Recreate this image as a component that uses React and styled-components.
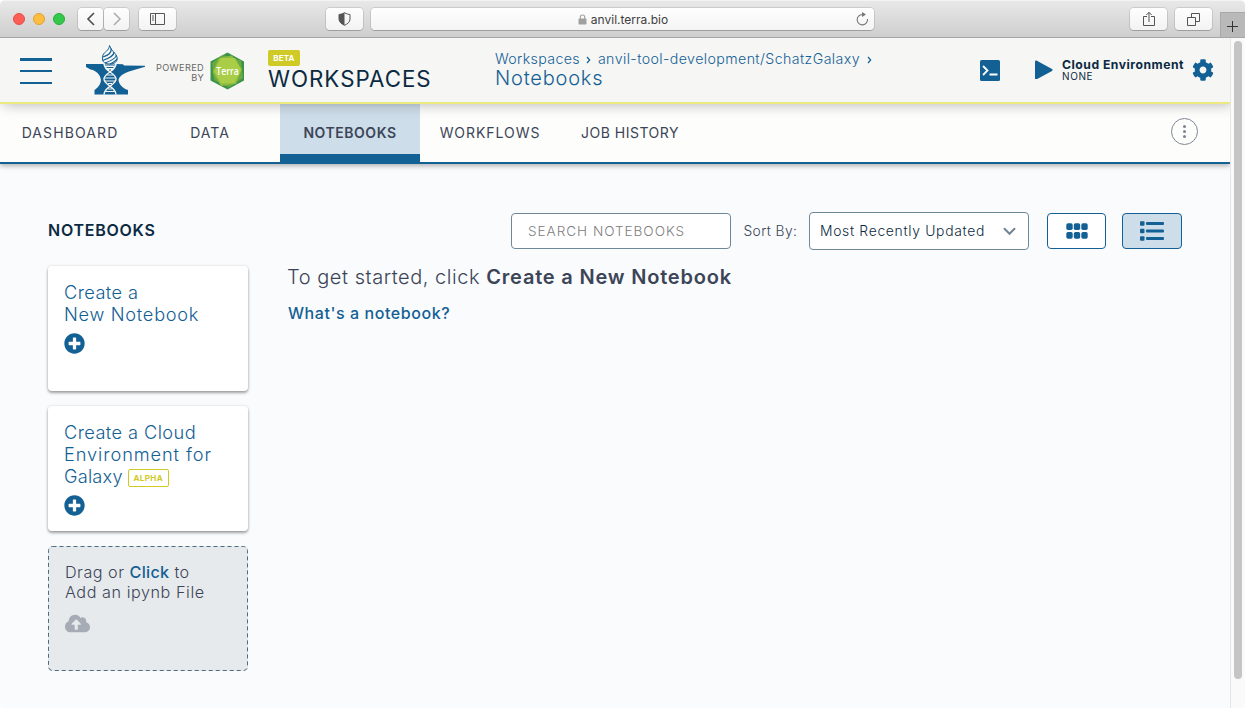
import React from "react";
import styled, { createGlobalStyle } from "styled-components";
import { FaPlusCircle, FaCloudUploadAlt, FaCog } from "react-icons/fa";

const c = {
  blue: "#136094",
  navy: "#0b2a42",
  text: "#3c4558",
  lime: "#cfca26",
  active: "#cddde9",
  page: "#fafbfd",
};

const GlobalStyle = createGlobalStyle`
  *, *::before, *::after { box-sizing: border-box; }
  body {
    margin: 0;
    overflow: hidden;
    background: #fff;
    color: ${c.text};
    font-family: Inter, "Liberation Sans", sans-serif;
  }
  button, input { font: inherit; color: inherit; }
  svg { display: block; flex: none; }
`;

const Window = styled.div`
  display: flex;
  flex-direction: column;
  width: 1245px;
  height: 708px;
  border-radius: 5px 5px 4px 4px;
  overflow: hidden;
  background: ${c.page};
`;

/* Letter spacing and size vary per label; everything else is shared. */
const Label = styled.span`
  white-space: nowrap;
  font-size: ${(p) => p.$size}px;
  font-weight: ${(p) => p.$weight || 400};
  letter-spacing: ${(p) => p.$track || 0}px;
  line-height: ${(p) => (p.$line ? `${p.$line}px` : "normal")};
  color: ${(p) => p.$color || "inherit"};
`;

/* ---------- browser chrome ---------- */

const Chrome = styled.div`
  flex: none;
  display: flex;
  align-items: flex-start;
  height: 38px;
  padding: 7px 0 0 13px;
  background: linear-gradient(#e8e8e8, #cecece);
  border-top: 1px solid #f3f3f3;
  border-bottom: 1px solid #a5a5a5;
`;

const Lights = styled.div`
  display: flex;
  gap: 8px;
  padding-top: 5px;
  margin-right: 13px;
`;

const Light = styled.span`
  width: 12px;
  height: 12px;
  border-radius: 50%;
  background: ${(p) => p.$fill};
  border: 1px solid ${(p) => p.$edge};
`;

const ChromeButton = styled.button`
  display: flex;
  align-items: center;
  justify-content: center;
  width: ${(p) => p.$w || 37}px;
  height: 22px;
  margin: 0 ${(p) => p.$after || 0}px 0 0;
  padding: 0;
  border: 0;
  border-radius: 4px;
  background: linear-gradient(#fefefe, #f3f3f3);
  box-shadow: 0 0 0 1px rgba(0, 0, 0, 0.1), 0 1px 0 0 rgba(0, 0, 0, 0.16);
`;

const UrlBar = styled.div`
  position: relative;
  display: flex;
  align-items: center;
  justify-content: center;
  gap: 4px;
  width: 503px;
  height: 22px;
  padding-left: 1px;
  margin-right: 256px;
  border-radius: 4px;
  background: linear-gradient(#fff, #f4f4f4);
  box-shadow: 0 0 0 1px rgba(0, 0, 0, 0.1), 0 1px 0 0 rgba(0, 0, 0, 0.16);
`;

const Reload = styled.span`
  position: absolute;
  right: 5px;
  top: 4px;
`;

const NewTab = styled.button`
  display: flex;
  align-items: center;
  justify-content: center;
  width: 25px;
  height: 25px;
  margin: 4px 0 0 1px;
  padding: 2px 2px 0 0;
  border: solid #a9a9a9;
  border-width: 1px 0 0 1px;
  background: #b9b9b9;
`;

/* ---------- page ---------- */

const Viewport = styled.div`
  flex: 1;
  display: flex;
  min-height: 0;
`;

const Page = styled.div`
  flex: 1;
  display: flex;
  flex-direction: column;
`;

const ScrollTrack = styled.div`
  width: 15px;
  padding: 3px 0 0 3px;
  background: #fafafa;
  border-left: 1px solid #e6e6e6;
`;

const ScrollThumb = styled.div`
  width: 8px;
  height: 638px;
  border-radius: 4px;
  background: #c5c5c5;
`;

const Header = styled.header`
  position: relative;
  z-index: 2;
  flex: none;
  display: flex;
  align-items: flex-start;
  height: 66px;
  padding: 0 16px 0 20px;
  color: ${c.navy};
  background: #f6f6f4;
  border-bottom: 2px solid #ebe980;
  box-shadow: 3px 0 13px 0 rgba(0, 0, 0, 0.3);
  clip-path: inset(0 0 -20px 0);
`;

const Burger = styled.button`
  display: flex;
  flex-direction: column;
  justify-content: space-between;
  width: 32px;
  height: 26px;
  margin: 20px 33px 0 0;
  padding: 0;
  border: 0;
  background: none;
`;

const BurgerLine = styled.span`
  height: 2.5px;
  background: ${c.blue};
`;

const Logo = styled.div`
  margin: 7px 0 0;
  width: 62px;
`;

const Powered = styled.div`
  display: flex;
  flex-direction: column;
  align-items: flex-end;
  width: 57px;
  margin-top: 25px;
`;

const Hexagon = styled.div`
  margin: 14px 23px 0 6px;
  width: 35px;
`;

const TitleBlock = styled.div`
  display: flex;
  flex-direction: column;
  align-items: flex-start;
  width: 227px;
  padding-top: 12px;
`;

const Beta = styled.span`
  display: flex;
  align-items: center;
  justify-content: center;
  width: 32px;
  height: 16px;
  border-radius: 2px;
  background: ${c.lime};
`;

const Crumbs = styled.nav`
  display: flex;
  flex-direction: column;
  flex: 1;
  padding-top: 12px;
  color: ${c.blue};
`;

const CrumbRow = styled.div`
  display: flex;
  align-items: center;
  height: 18px;
`;

const CrumbArrow = styled.svg`
  margin: 2px 6.5px 0;
`;

const Runtime = styled.div`
  display: flex;
  align-items: flex-start;
  padding-top: 20px;
`;

const RuntimeText = styled.div`
  display: flex;
  flex-direction: column;
  width: 140px;
  padding-left: 9px;
`;

const Terminal = styled.div`
  margin: 1.5px 35px 0 0;
`;

const GearIcon = styled(FaCog)`
  margin: 1px 0 0 -1px;
`;

const Tabs = styled.nav`
  position: relative;
  z-index: 1;
  flex: none;
  display: flex;
  height: 60px;
  background: #fdfdfb;
  border-bottom: 2px solid ${c.blue};
  box-shadow: 0 2px 5px 0 rgba(0, 0, 0, 0.3);
  clip-path: inset(0 0 -12px 0);
`;

const Tab = styled.a`
  display: flex;
  align-items: center;
  justify-content: center;
  width: 140px;
  height: 58px;
  padding: ${(p) => (p.$active ? "7px 0 0" : "0 0 1px")};
  color: ${c.text};
  background: ${(p) => (p.$active ? c.active : "transparent")};
  border-bottom: ${(p) => (p.$active ? `8px solid ${c.blue}` : 0)};
`;

const MoreButton = styled.button`
  display: flex;
  flex-direction: column;
  align-items: center;
  justify-content: center;
  gap: 2px;
  width: 27px;
  height: 27px;
  margin: 14px 32px 0 auto;
  padding: 0;
  border: 1.5px solid #7f8596;
  border-radius: 50%;
  background: none;
`;

const Dot = styled.i`
  width: 3px;
  height: 3px;
  border-radius: 50%;
  background: #7f8596;
`;

const Content = styled.main`
  flex: 1;
  padding: 48px 48px 0;
`;

const Tools = styled.div`
  display: flex;
  align-items: center;
  height: 38px;
`;

const SectionTitle = styled.div`
  width: 463px;
  padding-bottom: 2px;
`;

const Search = styled.input`
  width: 220px;
  height: 36px;
  margin-right: 12px;
  padding: 0 16px;
  border: 1px solid #6f8899;
  border-radius: 4px;
  background: #fff;
  font-size: 13.6px;
  letter-spacing: 0.95px;
  &::placeholder { color: #808080; opacity: 1; font-weight: 300; }
`;

const SortLabel = styled.div`
  width: 66px;
  padding: 0 0 2px 0.5px;
`;

const Select = styled.div`
  display: flex;
  align-items: center;
  justify-content: space-between;
  width: 220px;
  height: 38px;
  margin-right: 18px;
  padding: 0 12px 0 10px;
  border: 1px solid #6f8899;
  border-radius: 4px;
  background: #fff;
`;

const ViewButton = styled.button`
  display: flex;
  align-items: center;
  justify-content: center;
  width: ${(p) => (p.$active ? 60 : 59)}px;
  height: 36px;
  margin-right: ${(p) => (p.$active ? 0 : 16)}px;
  padding: 0;
  border: 1px solid ${c.blue};
  border-radius: 4px;
  background: ${(p) => (p.$active ? c.active : "#fff")};
`;

const Columns = styled.div`
  display: flex;
  gap: 40px;
  padding-top: 16px;
`;

const Side = styled.div`
  display: flex;
  flex-direction: column;
  gap: 15px;
`;

const Card = styled.div`
  display: flex;
  flex-direction: column;
  width: 200px;
  height: 125px;
  padding: 15px 16px 0;
  border-radius: 4px;
  color: ${c.blue};
  background: #fff;
  box-shadow: 0 2px 3px 0 rgba(0, 0, 0, 0.35), 0 0 3px 0 rgba(0, 0, 0, 0.12);
`;

const CardLine = styled.div`
  flex: none;
  display: flex;
  align-items: center;
  height: 22px;
`;

const Alpha = styled.span`
  display: flex;
  align-items: center;
  justify-content: center;
  width: 41px;
  height: 18px;
  margin: 4px 0 0 5px;
  border: 1px solid ${c.lime};
  border-radius: 2px;
`;

const PlusIcon = styled(FaPlusCircle)`
  margin-top: 8px;
`;

const DropZone = styled.div`
  position: relative;
  width: 200px;
  height: 125px;
  padding: 16px 17px;
  border-radius: 4px;
  background: #e7eaec;
`;

const DropBorder = styled.svg`
  position: absolute;
  left: 0;
  top: 0;
`;

const DropLine = styled.div`
  height: 20px;
  line-height: 20px;
  white-space: nowrap;
`;

const UploadIcon = styled(FaCloudUploadAlt)`
  margin-top: 9px;
`;

const Intro = styled.div`
  display: flex;
  flex-direction: column;
  align-items: flex-start;
`;

const IntroLine = styled.div`
  height: 23px;
  margin: -1px 0 15px -1px;
  white-space: nowrap;
`;

const AnvilLogo = () => (
  <svg width="60" height="50" viewBox="0 0 60 50">
    <path
      fill={c.blue}
      d="M1 19H31.500L38 19.300 39 20.500 60 20.700V21.700L44 26.500C37 29 34 32 33.500 35C34 39 37 43 43 45V49.500H9.500V45C14 42 17 37 15.500 33C14 27.500 9 25 5.500 24.500L1 22Z"
    />
    <path fill="#f6f6f4" d="M18 18H32C31 23 29 25 25 27.500C20 25 19 22 18 18Z" />
    <g fill="none" stroke="#f6f6f4" strokeWidth="1.400">
      <path d="M25 27C21 29.500 19 31 19 34C19 40 31 42 31 49.500M25 27C29 29.500 31 31 31 34C31 40 19 42 19 49.500" />
      <path strokeWidth="1" d="M22 30H28M20 33H30M20 36H30M23 38.500H27M23 44H27M20.500 46.500H29.500" />
    </g>
    <g fill="none" stroke={c.blue} strokeWidth="1">
      <path d="M20 20H30M21.500 22.500H28.500M24 25H26" />
    </g>
    <path fill="#f6f6f4" stroke={c.blue} strokeWidth="1" d="M24.500 .5C26 6 31 8 32 12C33 17 29 19 25 19C19 19 16 16 18 10C19 7 24 6 24.500 .5Z" />
    <g fill="none" stroke={c.blue} strokeWidth="1.200">
      <path d="M18 12C23 10 27 8 26 3.500M17.500 15.500C24 13.500 29 10 29 7M20 18C27 15.500 31 13 31.500 10M25 19C29 17 32 15.500 32 13.500" />
    </g>
  </svg>
);

const TerraLogo = () => (
  <svg width="35" height="38" viewBox="0 0 35 38">
    <path fill="#3b9348" d="M17.500 .5 34 9.500V28.500L17.500 37.500 .5 28.500V9.500Z" />
    <path fill="#69a843" d="M13 3 31 8.500 33 26 19 35.500 4 28 2 11Z" />
    <path fill="#8cbb40" d="M22 3.500 32 17 26 32 11 34 2.500 20 9 6Z" />
    <path fill="#aacd47" d="M11 6 25 6 31 18 24.500 31 11 31.500 4 19Z" />
    <text x="17.500" y="22.500" textAnchor="middle" fill="#fff" fontFamily="Open Sans, sans-serif" fontSize="11" fontWeight="600" textLength="22.500" lengthAdjust="spacingAndGlyphs">
      Terra
    </text>
  </svg>
);

const Arrow = () => (
  <CrumbArrow width="5" height="8" viewBox="0 0 5 8">
    <path d="M1 1 3.700 4 1 7" fill="none" stroke={c.blue} strokeWidth="1.2" />
  </CrumbArrow>
);

const Chevron = ({ flip, color }) => (
  <svg width="10" height="16" viewBox="0 0 10 16">
    <path d={flip ? "M2 2 8 8 2 14" : "M8 2 2 8 8 14"} fill="none" stroke={color} strokeWidth="1.6" />
  </svg>
);

function BrowserBar() {
  return (
    <Chrome>
      <Lights>
        <Light $fill="#fc5d57" $edge="#e5504a" />
        <Light $fill="#fdbd3f" $edge="#e0a234" />
        <Light $fill="#34c84a" $edge="#28ae3a" />
      </Lights>
      <ChromeButton $w={25} $after={1}><Chevron color="#4c4c4c" /></ChromeButton>
      <ChromeButton $w={25} $after={10}><Chevron flip color="#adadad" /></ChromeButton>
      <ChromeButton $after={150}>
        <svg width="15" height="12" viewBox="0 0 15 12" fill="none" stroke="#555">
          <path d="M.5 .5H14.500V11.500H.5ZM5.500 .5V11.500M2 3H4M2 5H4M2 7H4" />
        </svg>
      </ChromeButton>
      <ChromeButton $after={8}>
        <svg width="13" height="14" viewBox="0 0 13 14">
          <path d="M6.500 .7C8.500 2 10.500 2.300 12 2.500V7C12 10 9.500 12 6.500 13.300C3.500 12 1 10 1 7V2.500C2.500 2.300 4.500 2 6.500 .7Z" fill="none" stroke="#555" />
          <path d="M6.500 .7V13.300C3.500 12 1 10 1 7V2.500C2.500 2.300 4.500 2 6.500 .7Z" fill="#555" />
        </svg>
      </ChromeButton>
      <UrlBar>
        <svg width="9" height="11" viewBox="0 0 9 11">
          <rect x=".5" y="4.500" width="8" height="6" rx="1" fill="#a0a0a0" />
          <path d="M2.300 5V3C2.300 .3 6.700 .3 6.700 3V5" fill="none" stroke="#a0a0a0" strokeWidth="1.1" />
        </svg>
        <Label $size={12} $color="#404040">anvil.terra.bio</Label>
        <Reload>
          <svg width="14" height="14" viewBox="0 0 14 14">
            <path d="M12.500 7A5.200 5.200 0 1 1 7.300 2.500H8" fill="none" stroke="#777" strokeWidth="1.1" />
            <path d="M7 0 11 2.600 7 5Z" fill="#777" />
          </svg>
        </Reload>
      </UrlBar>
      <ChromeButton $after={8}>
        <svg width="12" height="16" viewBox="0 0 12 16" fill="none" stroke="#555">
          <path d="M4 5.500H.5V14.500H11.500V5.500H8M6 11V1.500M3.300 4 6 1.300 8.700 4" />
        </svg>
      </ChromeButton>
      <ChromeButton $after={7}>
        <svg width="13" height="13" viewBox="0 0 13 13" fill="none" stroke="#555">
          <path d="M.5 4.500H8.500V12.500H.5ZM4.500 4.500V.5H12.500V8.500H8.500" />
        </svg>
      </ChromeButton>
      <NewTab>
        <svg width="11" height="11" viewBox="0 0 11 11" stroke="#333"><path d="M0 5.500H11M5.500 0V11" /></svg>
      </NewTab>
    </Chrome>
  );
}

function AppHeader() {
  return (
    <Header>
      <Burger><BurgerLine /><BurgerLine /><BurgerLine /></Burger>
      <Logo><AnvilLogo /></Logo>
      <Powered>
        <Label $size={9.2} $track={0.35} $line={10} $color="#676767">POWERED</Label>
        <Label $size={9.2} $track={0.2} $line={9} $color="#676767">BY</Label>
      </Powered>
      <Hexagon><TerraLogo /></Hexagon>
      <TitleBlock>
        <Beta><Label $size={8} $weight={700} $track={0.2} $color="#fff">BETA</Label></Beta>
        <Label $size={22.3} $track={1} $line={26} $weight={400}>WORKSPACES</Label>
      </TitleBlock>
      <Crumbs>
        <CrumbRow>
          <Label $size={14.2} $track={0.35} $line={16} $weight={350}>Workspaces</Label>
          <Arrow />
          <Label $size={14.2} $track={0.4} $line={16} $weight={350}>anvil-tool-development/SchatzGalaxy</Label>
          <Arrow />
        </CrumbRow>
        <Label $size={20} $track={0.8} $line={20} $weight={350}>Notebooks</Label>
      </Crumbs>
      <Runtime>
        <Terminal>
          <svg width="20" height="21" viewBox="0 0 20 21">
            <rect width="20" height="21" rx="1.500" fill={c.blue} />
            <path d="M3 6 7.500 10.500 3 15M9.500 14.500H17.500" fill="none" stroke="#fff" strokeWidth="1.8" />
          </svg>
        </Terminal>
        <svg width="18" height="21" viewBox="0 0 18 21">
          <path d="M1 3 16.500 11.500 1 20Z" transform="translate(0 .5)" fill={c.blue} stroke={c.blue} strokeWidth="2" strokeLinejoin="round" />
        </svg>
        <RuntimeText>
          <Label $size={12.2} $weight={700} $track={0.5} $line={14}>Cloud Environment</Label>
          <Label $size={10} $track={0.6} $line={9}>NONE</Label>
        </RuntimeText>
        <GearIcon size={22} color={c.blue} />
      </Runtime>
    </Header>
  );
}

const tabs = [
  ["DASHBOARD", 1.1],
  ["DATA", 1],
  ["NOTEBOOKS", 0.55],
  ["WORKFLOWS", 0.95],
  ["JOB HISTORY", 0.5],
];

export default function App() {
  return (
    <Window>
      <GlobalStyle />
      <BrowserBar />
      <Viewport>
        <Page>
          <AppHeader />
          <Tabs>
            {tabs.map(([name, track]) => {
              const active = name === "NOTEBOOKS";
              return (
                <Tab key={name} $active={active}>
                  <Label $size={14} $track={track} $line={17} $weight={active ? 600 : 400}>{name}</Label>
                </Tab>
              );
            })}
            <MoreButton><Dot /><Dot /><Dot /></MoreButton>
          </Tabs>
          <Content>
            <Tools>
              <SectionTitle>
                <Label $size={16} $weight={600} $track={0.75} $color={c.navy}>NOTEBOOKS</Label>
              </SectionTitle>
              <Search placeholder="SEARCH NOTEBOOKS" />
              <SortLabel><Label $size={13.8} $track={0.4} $weight={350}>Sort By:</Label></SortLabel>
              <Select>
                <Label $size={13.9} $track={0.68} $weight={350} $color={c.navy}>Most Recently Updated</Label>
                <svg width="13" height="9" viewBox="0 0 13 9">
                  <path d="M1.500 1.800 6.500 6.800 11.500 1.800" fill="none" stroke="#708697" strokeWidth="2" strokeLinecap="round" />
                </svg>
              </Select>
              <ViewButton>
                <svg width="22" height="16" viewBox="0 0 22 16" fill={c.blue}>
                  {[0, 7.5, 15].map((x) => [0.3, 9].map((y) => (
                    <rect key={`${x}-${y}`} x={x + 0.3} y={y} width="6.400" height="6.700" rx="1.700" />
                  )))}
                </svg>
              </ViewButton>
              <ViewButton $active>
                <svg width="24" height="20" viewBox="0 0 24 20" fill={c.blue}>
                  {[0, 7.5, 15].map((y) => (
                    <g key={y}>
                      <rect y={y + 0.3} width="4.500" height="4.500" rx="1" />
                      <rect x="6" y={y + 1.1} width="18" height="2.800" rx="1" />
                    </g>
                  ))}
                </svg>
              </ViewButton>
            </Tools>
            <Columns>
              <Side>
                <Card>
                  <CardLine><Label $size={18.2} $track={0.4} $weight={350}>Create a</Label></CardLine>
                  <CardLine><Label $size={18.2} $track={0.72} $weight={350}>New Notebook</Label></CardLine>
                  <PlusIcon size={21} />
                </Card>
                <Card>
                  <CardLine><Label $size={18.2} $track={0.42} $weight={350}>Create a Cloud</Label></CardLine>
                  <CardLine><Label $size={18.2} $track={0.92} $weight={350}>Environment for</Label></CardLine>
                  <CardLine>
                    <Label $size={18.2} $track={0.2} $weight={350}>Galaxy</Label>
                    <Alpha><Label $size={8} $weight={700} $track={0.4} $color={c.lime}>ALPHA</Label></Alpha>
                  </CardLine>
                  <PlusIcon size={21} />
                </Card>
                <DropZone>
                  <DropBorder width="200" height="125">
                    <rect x=".5" y=".5" width="199" height="124" rx="4" fill="none" stroke="#4f6c80" strokeDasharray="4 3" />
                  </DropBorder>
                  <DropLine>
                    <Label $size={16.2} $track={0.48} $weight={350}>Drag or <Label as="b" $size={16.2} $weight={500} $track={0.3} $color={c.blue}>Click</Label> to</Label>
                  </DropLine>
                  <DropLine><Label $size={16.2} $track={0.55} $weight={350}>Add an ipynb File</Label></DropLine>
                  <UploadIcon size={25} color="#a6acb5" />
                </DropZone>
              </Side>
              <Intro>
                <IntroLine>
                  <Label $size={20} $track={0.54} $line={23} $weight={300}>
                    To get started, click <Label as="b" $size={20} $weight={600} $track={0.8}>Create a New Notebook</Label>
                  </Label>
                </IntroLine>
                <Label $size={16} $weight={500} $track={0.57} $line={20} $color={c.blue}>What's a notebook?</Label>
              </Intro>
            </Columns>
          </Content>
        </Page>
        <ScrollTrack><ScrollThumb /></ScrollTrack>
      </Viewport>
    </Window>
  );
}
